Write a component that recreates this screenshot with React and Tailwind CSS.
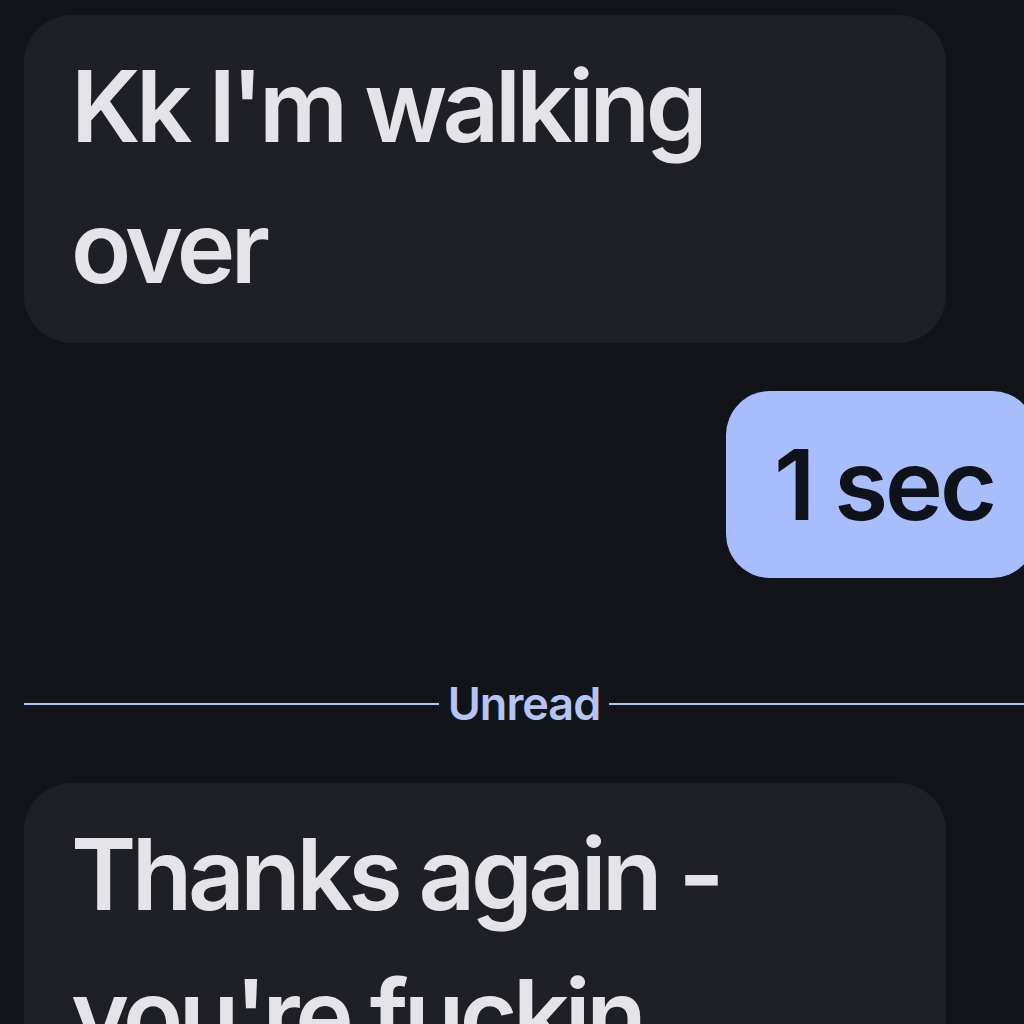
export default function App() {
  return (
    <div className="w-[1024px] h-[1024px] overflow-hidden bg-[#131419] font-['Inter',sans-serif]">
      <div className="flex flex-col pl-[24px] pt-[15px]">
        <div className="w-[922px] rounded-[48px] bg-[#1f2025] pl-[47px] pr-[40px] pt-[21px] pb-[25px]">
          <p className="text-[#e3e3e8] text-[99px] leading-[141px] font-semibold tracking-[-4.5px]">Kk I'm walking over</p>
        </div>
        <div className="flex justify-end mt-[48px] mr-[-12px]">
          <div className="rounded-[44px] bg-[#a8bdfc] pl-[48px] pr-[42px] h-[187px] flex items-center">
            <span className="text-[#0f1218] text-[98px] font-semibold tracking-[-3px]">1 sec</span>
          </div>
        </div>
        <div className="flex items-center mt-[99px] gap-[9px] h-[54px]">
          <div className="flex-1 h-[2px] bg-[#b4c4f4]"></div>
          <span className="text-[#b4c4f4] text-[45px] font-semibold tracking-[-1px]">Unread</span>
          <div className="flex-1 h-[2px] bg-[#b4c4f4]"></div>
        </div>
        <div className="mt-[52px] w-[922px] rounded-[48px] bg-[#1f2025] pl-[47px] pr-[40px] pt-[21px] pb-[25px]">
          <p className="text-[#e3e3e8] text-[99px] leading-[141px] font-semibold tracking-[-4.5px]">Thanks again - you're fuckin amazing</p>
        </div>
      </div>
    </div>
  );
}
